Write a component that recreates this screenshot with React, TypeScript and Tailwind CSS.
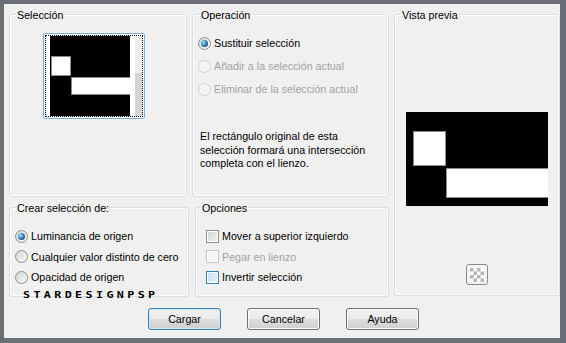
import type { ReactNode } from "react"

const groupBox =
  "relative border border-[#d5dfe5] rounded-[3px] shadow-[inset_0_0_0_1px_#ffffff]"

function GroupTitle({ children, className }: { children: ReactNode; className: string }) {
  return (
    <span className={`absolute -top-[6px] px-[1px] leading-[13px] bg-[#f0f0f0] ${className}`}>
      {children}
    </span>
  )
}

function Radio({ label, checked, disabled }: { label: string; checked?: boolean; disabled?: boolean }) {
  return (
    <div className="flex items-center h-full">
      <span
        className={`w-[13px] h-[13px] rounded-full border flex items-center justify-center shrink-0 ${
          disabled
            ? "border-[#cfcfcf] bg-[#f5f5f5]"
            : "border-[#8e8f8f] bg-[linear-gradient(135deg,#d4d4d4,#fbfbfb)]"
        }`}
      >
        {checked && (
          <span className="w-[7px] h-[7px] rounded-full bg-[radial-gradient(circle_at_35%_35%,#a6e1fb,#2a73ab_55%,#0d3b66)]" />
        )}
      </span>
      <span className={`ml-[3px] ${disabled ? "text-[#a3a3a3]" : "text-black"}`}>{label}</span>
    </div>
  )
}

function Check({ label, disabled, hot }: { label: string; disabled?: boolean; hot?: boolean }) {
  let box = "border-[#8e8f8f] bg-[linear-gradient(135deg,#d2d2d2,#f6f6f6)]"
  if (disabled) box = "border-[#c6c6c6] bg-[#f5f5f5]"
  if (hot) box = "border-[#3c7fb1] bg-[linear-gradient(135deg,#b9dff7,#e9f6fd)]"
  return (
    <div className="flex items-center h-full">
      <span className={`w-[13px] h-[13px] border shrink-0 shadow-[inset_0_0_0_1px_#ffffff] ${box}`} />
      <span className={`ml-[3px] ${disabled ? "text-[#a3a3a3]" : "text-black"}`}>{label}</span>
    </div>
  )
}

function DialogButton({ label, primary }: { label: string; primary?: boolean }) {
  return (
    <button
      className={`w-[73px] h-[22px] rounded-[3px] border text-black bg-[linear-gradient(to_bottom,#f2f2f2_0%,#ebebeb_50%,#dddddd_51%,#cfcfcf_100%)] ${
        primary
          ? "border-[#3c7fb1] shadow-[inset_0_0_0_1px_#c9e7f7]"
          : "border-[#707070] shadow-[inset_0_0_0_1px_#fbfbfb]"
      }`}
    >
      {label}
    </button>
  )
}

export default function App() {
  return (
    <div className="relative w-[566px] h-[343px] bg-[#f0f0f0] border-t-[4px] border-l-[4px] border-r-[6px] border-b-[5px] border-[#6b6e75] font-['Liberation_Sans',Arial,sans-serif] text-[10.7px] text-black">
      <div className="flex gap-[5px] pl-[5px] pt-[10px]">
        {/* left column */}
        <div className="flex flex-col w-[380px]">
          <div className="flex gap-[5px] h-[183px]">
            {/* Selección */}
            <div className={`${groupBox} w-[178px] h-full`}>
              <GroupTitle className="left-[6px]">Selección</GroupTitle>
              <div className="ml-[33px] mt-[18px] w-[102px] h-[86px] border border-[#7fb2d9] rounded-[2px] bg-white p-[1px]">
                <div className="h-full flex pl-[4px] border border-dotted border-black">
                  <svg width="80" height="80" className="block shrink-0">
                    <rect x="0" y="0" width="80" height="80" fill="#000" />
                    <rect x="1.5" y="20.5" width="19" height="19" fill="#fff" stroke="#8a8a8a" />
                    <rect x="21.5" y="41.5" width="62" height="17" fill="#fff" stroke="#8a8a8a" />
                  </svg>
                  <div className="w-[5px] bg-white" />
                  <div className="w-[7px] flex flex-col">
                    <div className="h-[37px] bg-[#ececec]" />
                    <div className="flex-1 bg-[#d4d4d4]" />
                  </div>
                </div>
              </div>
            </div>

            {/* Operación */}
            <div className={`${groupBox} w-[197px] h-full`}>
              <GroupTitle className="left-[7px]">Operación</GroupTitle>
              <div className="pl-[5px] pt-[17px]">
                <div className="h-[23px]">
                  <Radio label="Sustituir selección" checked />
                </div>
                <div className="h-[23px]">
                  <Radio label="Añadir a la selección actual" disabled />
                </div>
                <div className="h-[23px]">
                  <Radio label="Eliminar de la selección actual" disabled />
                </div>
              </div>
              <p className="pl-[7px] mt-[29px] leading-[13.5px]">
                El rectángulo original de esta
                <br />
                selección formará una intersección
                <br />
                completa con el lienzo.
              </p>
            </div>
          </div>

          <div className="flex gap-[6px] mt-[10px] h-[90px]">
            {/* Crear selección de */}
            <div className={`${groupBox} w-[180px] h-full`}>
              <GroupTitle className="left-[6px]">Crear selección de:</GroupTitle>
              <div className="pl-[5px] pt-[18px]">
                <div className="h-[20.5px]">
                  <Radio label="Luminancia de origen" checked />
                </div>
                <div className="h-[20.5px]">
                  <Radio label="Cualquier valor distinto de cero" />
                </div>
                <div className="h-[20.5px]">
                  <Radio label="Opacidad de origen" />
                </div>
              </div>
            </div>

            {/* Opciones */}
            <div className={`${groupBox} w-[194px] h-full`}>
              <GroupTitle className="left-[5px]">Opciones</GroupTitle>
              <div className="pl-[10px] pt-[18px]">
                <div className="h-[20.5px]">
                  <Check label="Mover a superior izquierdo" />
                </div>
                <div className="h-[20.5px]">
                  <Check label="Pegar en lienzo" disabled />
                </div>
                <div className="h-[20.5px]">
                  <Check label="Invertir selección" hot />
                </div>
              </div>
            </div>
          </div>
        </div>

        {/* Vista previa */}
        <div className={`${groupBox} w-[166px] h-[282px]`}>
          <GroupTitle className="left-[6px]">Vista previa</GroupTitle>
          <svg width="142" height="94" className="block ml-[11px] mt-[97px]">
            <rect x="0" y="0" width="142" height="94" fill="#000" />
            <rect x="7.5" y="19.5" width="32" height="34" fill="#fff" stroke="#8a8a8a" />
            <rect x="40.5" y="56.5" width="104" height="29" fill="#fff" stroke="#8a8a8a" />
          </svg>
          <div className="flex justify-center mt-[58px]">
            <div className="w-[22px] h-[21px] rounded-[3px] border border-[#8a8a8a] bg-[#f4f4f4] flex items-center justify-center">
              <svg width="14" height="14" className="block">
                <rect width="14" height="14" fill="#fff" />
                <rect x="0" y="0" width="3.5" height="3.5" fill="#b5b5b5" />
                <rect x="7" y="0" width="3.5" height="3.5" fill="#b5b5b5" />
                <rect x="3.5" y="3.5" width="3.5" height="3.5" fill="#b5b5b5" />
                <rect x="10.5" y="3.5" width="3.5" height="3.5" fill="#b5b5b5" />
                <rect x="0" y="7" width="3.5" height="3.5" fill="#b5b5b5" />
                <rect x="7" y="7" width="3.5" height="3.5" fill="#b5b5b5" />
                <rect x="3.5" y="10.5" width="3.5" height="3.5" fill="#b5b5b5" />
                <rect x="10.5" y="10.5" width="3.5" height="3.5" fill="#b5b5b5" />
              </svg>
            </div>
          </div>
        </div>
      </div>

      {/* buttons */}
      <div className="flex justify-center gap-[26px] mt-[11px] pl-[3px]">
        <DialogButton label="Cargar" primary />
        <DialogButton label="Cancelar" />
        <DialogButton label="Ayuda" />
      </div>

      {/* watermark */}
      <span className="absolute left-[19px] top-[287px] origin-left scale-x-[1.3] font-['DejaVu_Sans_Mono',monospace] font-bold text-[9px] leading-[9px] tracking-[2.6px]">
        STARDESIGNPSP
      </span>
    </div>
  )
}
